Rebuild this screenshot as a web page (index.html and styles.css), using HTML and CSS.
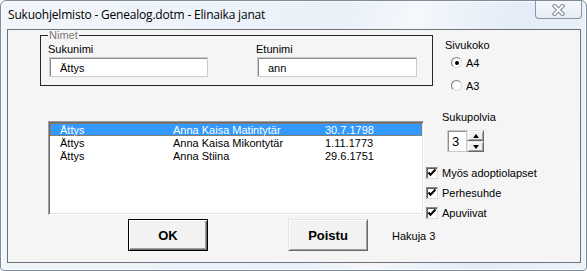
FILE: index.html
```html
<!DOCTYPE html>
<html lang="fi">
<head>
    <meta charset="UTF-8">
    <title>Sukuohjelmisto - Genealog.dotm - Elinaika janat</title>
    <link rel="stylesheet" href="styles.css">
</head>
<body>

    <div class="window">
        <!-- otsikkopalkki -->
        <div class="titlebar">
            <span class="title">Sukuohjelmisto - Genealog.dotm - Elinaika janat</span>
            <button class="close" aria-label="Sulje">
                <svg width="13" height="12" viewBox="0 0 13 12">
                    <path d="M2.5 2 L10.5 10 M10.5 2 L2.5 10" stroke="#7c8591" stroke-width="4" stroke-linecap="square"/>
                    <path d="M2.5 2 L10.5 10 M10.5 2 L2.5 10" stroke="#fff" stroke-width="2" stroke-linecap="square"/>
                </svg>
            </button>
        </div>

        <div class="client">
            <div class="main">
                <fieldset class="names">
                    <legend>Nimet</legend>
                    <div class="field surname">
                        <label for="sukunimi">Sukunimi</label>
                        <input type="text" id="sukunimi" value="Ättys">
                    </div>
                    <div class="field firstname">
                        <label for="etunimi">Etunimi</label>
                        <input type="text" id="etunimi" value="ann">
                    </div>
                </fieldset>

                <div class="list">
                    <div class="row selected"><span>Ättys</span><span>Anna Kaisa Matintytär</span><span>30.7.1798</span></div>
                    <div class="row"><span>Ättys</span><span>Anna Kaisa Mikontytär</span><span>1.11.1773</span></div>
                    <div class="row"><span>Ättys</span><span>Anna Stiina</span><span>29.6.1751</span></div>
                </div>

                <div class="actions">
                    <button class="btn default">OK</button>
                    <button class="btn">Poistu</button>
                    <span class="count">Hakuja 3</span>
                </div>
            </div>

            <div class="side">
                <div class="side-label">Sivukoko</div>
                <div class="radio first"><span class="dot checked"></span>A4</div>
                <div class="radio"><span class="dot"></span>A3</div>

                <div class="side-label gens">Sukupolvia</div>
                <div class="spin">
                    <div class="spin-value">3</div>
                    <div class="spin-buttons">
                        <span class="spin-btn"><i class="arrow up"></i></span>
                        <span class="spin-btn"><i class="arrow down"></i></span>
                    </div>
                </div>

                <div class="check first"><span class="box"><svg width="10" height="10" viewBox="0 0 10 10"><polyline points="1.5,4.5 3.5,6.8 8.5,1.5" fill="none" stroke="#000" stroke-width="2"/></svg></span>Myös adoptiolapset</div>
                <div class="check"><span class="box"><svg width="10" height="10" viewBox="0 0 10 10"><polyline points="1.5,4.5 3.5,6.8 8.5,1.5" fill="none" stroke="#000" stroke-width="2"/></svg></span>Perhesuhde</div>
                <div class="check"><span class="box"><svg width="10" height="10" viewBox="0 0 10 10"><polyline points="1.5,4.5 3.5,6.8 8.5,1.5" fill="none" stroke="#000" stroke-width="2"/></svg></span>Apuviivat</div>
            </div>
        </div>
    </div>

</body>
</html>
```

FILE: styles.css
```css
* {
    box-sizing: border-box;
}
body {
    margin: 0;
    background: #fff;
    font-family: "Liberation Sans", Arial, sans-serif;
    font-size: 11px;
    color: #000;
}
.window {
    width: 587px;
    height: 271px;
    display: flex;
    flex-direction: column;
    border: 1px solid #7f8b99;
    border-radius: 6px 6px 4px 4px;
    background: linear-gradient(100deg, #f2f6fb 0%, #eaf1f9 55%, #f5f8fc 66%, #e3ecf7 82%, #edf3fa 100%);
    box-shadow: inset 0 0 0 1px #f9fbfe;
    overflow: hidden;
}
.titlebar {
    height: 28px;
    flex: none;
    display: flex;
    align-items: center;
    padding-left: 7px;
}
.title {
    font-family: "Open Sans", "Liberation Sans", sans-serif;
    font-size: 12px;
    letter-spacing: -0.2px;
    padding-bottom: 1px;
    white-space: nowrap;
}
.close {
    margin-left: auto;
    margin-right: 4px;
    align-self: flex-start;
    width: 47px;
    height: 18px;
    padding: 0;
    border: 1px solid #8d97a4;
    border-top: 0;
    border-radius: 0 0 4px 4px;
    background: linear-gradient(#f5f8fc, #e6edf6);
    display: flex;
    align-items: center;
    justify-content: center;
}
.client {
    flex: 1;
    margin: 0 5px 7px 6px;
    border: 1px solid #6e737a;
    background: #f5f5f5;
    display: flex;
}
.main {
    width: 416px;
    flex: none;
    display: flex;
    flex-direction: column;
    align-items: flex-start;
}

/* nimet-kehys */
.names {
    margin: 0 0 0 32px;
    width: 393px;
    min-width: 0;
    padding: 2px 7px 8px 7px;
    border: 1px solid #262626;
    display: flex;
}
.names legend {
    padding: 0 1px;
    font-size: 11px;
    line-height: 11px;
    color: #7a7a7a;
}
.field {
    display: flex;
    flex-direction: column;
    line-height: 13px;
}
.field.surname {
    width: 208px;
}
.field input {
    margin: 1px 0 0 1px;
    height: 20px;
    padding: 2px 0 0 10px;
    border: 1px solid #cbcbcb;
    box-shadow: inset 1px 1px 0 #8d8d8d;
    background: #fff;
    font-family: "Liberation Sans", Arial, sans-serif;
    font-size: 11px;
    color: #000;
    outline: none;
}
.surname input {
    width: 159px;
}
.firstname input {
    width: 160px;
}

/* tulokset */
.list {
    margin: 35px 0 0 40px;
    width: 376px;
    height: 94px;
    padding: 1px;
    border: 1px solid;
    border-color: #a0a0a0 #fff #fff #a0a0a0;
    box-shadow: inset 1px 1px 0 #696969, inset -1px -1px 0 #e3e3e3;
    background: #fff;
}
.row {
    height: 13px;
    line-height: 14px;
    padding-left: 10px;
    display: grid;
    grid-template-columns: 113px 152px auto;
    white-space: nowrap;
}
.row.selected {
    background: #3399ff;
    color: #fff;
    outline: 1px dotted #cc6600;
    outline-offset: -1px;
}

.actions {
    margin: 4px 0 0 120px;
    display: flex;
    align-items: center;
    white-space: nowrap;
}
.btn {
    width: 80px;
    height: 32px;
    flex: none;
    padding: 0;
    background: #f2f2f2;
    border: 1px solid;
    border-color: #e3e3e3 #696969 #696969 #e3e3e3;
    box-shadow: inset 1px 1px 0 #fff, inset -1px -1px 0 #a0a0a0;
    font-family: "Liberation Sans", Arial, sans-serif;
    font-size: 13px;
    font-weight: bold;
    color: #000;
}
.btn.default {
    border-color: #000;
    box-shadow: inset 1px 1px 0 #fff, inset -1px -1px 0 #696969, inset -2px -2px 0 #a0a0a0;
}
.btn + .btn {
    margin-left: 80px;
}
.count {
    flex: none;
    margin-left: 24px;
    padding-top: 1px;
}

/* oikea palsta */
.side {
    flex: 1;
    display: flex;
    flex-direction: column;
    align-items: flex-start;
    padding-top: 9px;
}
.side-label {
    line-height: 13px;
    margin-left: 21px;
}
.side-label.gens {
    margin: 18px 0 0 18px;
}
.radio {
    display: flex;
    gap: 4px;
    margin: 10px 0 0 27px;
    line-height: 13px;
}
.radio.first {
    margin-top: 5px;
}
.dot {
    width: 11px;
    height: 11px;
    border-radius: 50%;
    border: 1px solid;
    border-color: #7e7e7e #dcdcdc #dcdcdc #7e7e7e;
    background: radial-gradient(circle at 60% 60%, #fff 40%, #e6e6e6 100%);
    display: flex;
    align-items: center;
    justify-content: center;
}
.dot.checked::after {
    content: "";
    width: 4px;
    height: 4px;
    border-radius: 50%;
    background: #000;
}

.spin {
    margin: 6px 0 0 23px;
    display: flex;
}
.spin-value {
    width: 20px;
    height: 22px;
    padding: 2px 0 0 4px;
    border: 1px solid #cbcbcb;
    box-shadow: inset 1px 1px 0 #8d8d8d;
    background: #fff;
    font-size: 13px;
    line-height: 18px;
}
.spin-buttons {
    display: flex;
    flex-direction: column;
}
.spin-btn {
    width: 17px;
    height: 11px;
    background: #f0f0f0;
    border: 1px solid;
    border-color: #e3e3e3 #696969 #696969 #e3e3e3;
    box-shadow: inset 1px 1px 0 #fff, inset -1px -1px 0 #a0a0a0;
    display: flex;
    align-items: center;
    justify-content: center;
}
.arrow {
    width: 0;
    height: 0;
    border-left: 3.5px solid transparent;
    border-right: 3.5px solid transparent;
}
.arrow.up {
    border-bottom: 4px solid #000;
}
.arrow.down {
    border-top: 4px solid #000;
}

.check {
    display: flex;
    gap: 4px;
    margin: 7px 0 0 2px;
    line-height: 13px;
}
.check.first {
    margin-top: 15px;
}
.box {
    width: 12px;
    height: 12px;
    border: 1px solid;
    border-color: #8a8a8a #dcdcdc #dcdcdc #8a8a8a;
    box-shadow: inset 1px 1px 0 #5a5a5a;
    background: #fff;
    display: flex;
    align-items: center;
    justify-content: center;
}
```
